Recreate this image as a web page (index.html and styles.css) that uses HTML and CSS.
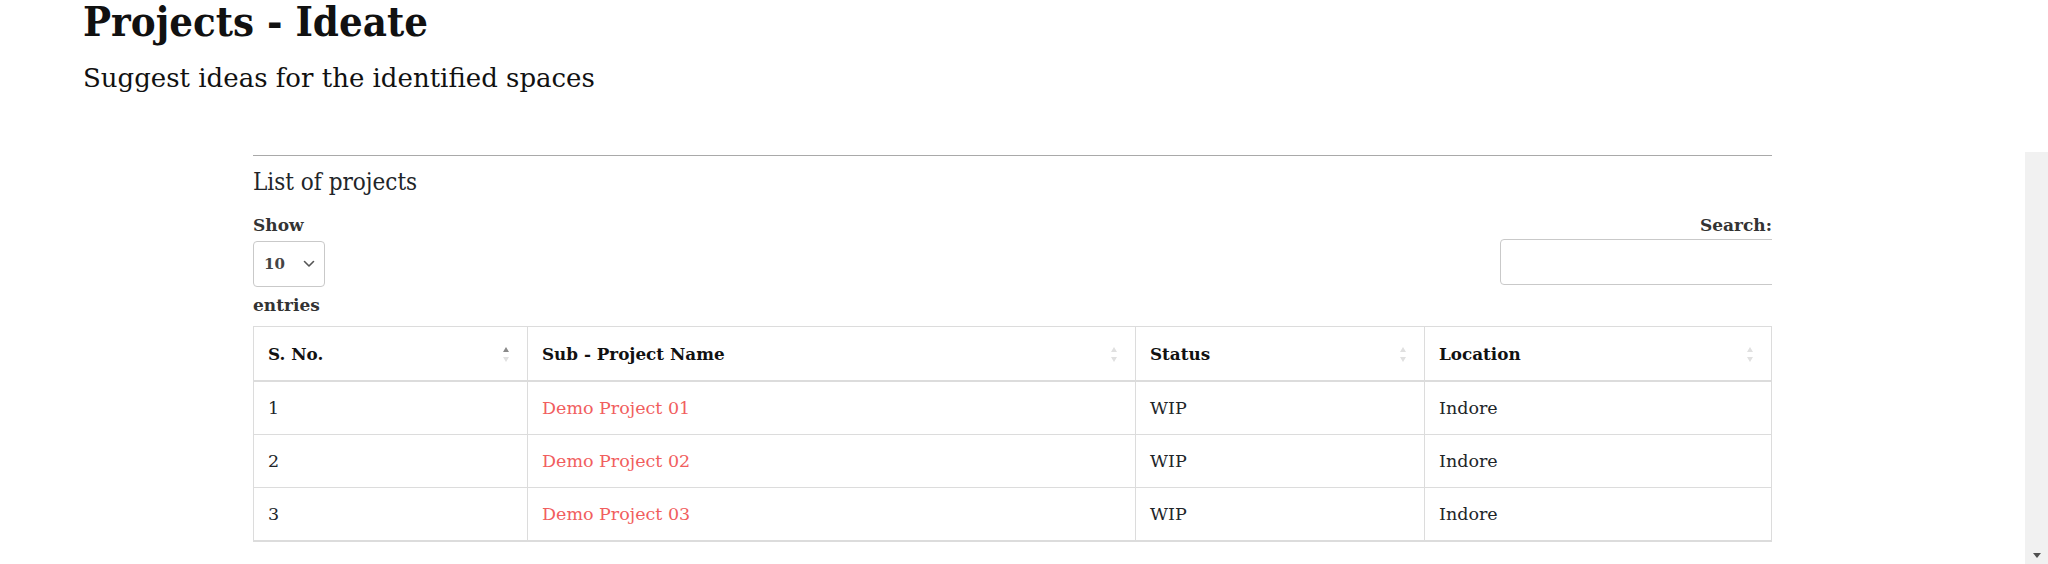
FILE: index.html
```html
<!DOCTYPE html>
<html lang="en">
<head>
<meta charset="utf-8">
<title>Projects - Ideate</title>
<link rel="stylesheet" href="styles.css">
</head>
<body>
  <header class="page-head">
    <h1 class="page-title">Projects - Ideate</h1>
    <p class="page-subtitle">Suggest ideas for the identified spaces</p>
  </header>
  <div class="workspace">
    <main class="content">
      <section class="panel">
        <hr class="panel-rule">
        <h2 class="panel-title">List of projects</h2>
        <div class="controls">
          <div class="length-control">
            <span class="control-label">Show</span>
            <div class="select-box">
              <span class="select-value">10</span>
              <svg class="chevron" width="12" height="8" viewBox="0 0 12 8"><path d="M1.5 1.5 L6 6 L10.5 1.5" fill="none" stroke="#555" stroke-width="1.6" stroke-linecap="round" stroke-linejoin="round"/></svg>
            </div>
            <span class="control-label">entries</span>
          </div>
          <div class="filter-control">
            <span class="control-label">Search:</span>
            <input class="search-input" type="text" aria-label="Search">
          </div>
        </div>
        <table class="projects">
          <colgroup>
            <col class="col-sno">
            <col class="col-name">
            <col class="col-status">
            <col class="col-loc">
          </colgroup>
          <thead>
            <tr>
              <th><div class="th-inner"><span>S. No.</span><span class="sort sort-asc"><i class="up"></i><i class="down"></i></span></div></th>
              <th><div class="th-inner"><span>Sub - Project Name</span><span class="sort"><i class="up"></i><i class="down"></i></span></div></th>
              <th><div class="th-inner"><span>Status</span><span class="sort"><i class="up"></i><i class="down"></i></span></div></th>
              <th><div class="th-inner"><span>Location</span><span class="sort"><i class="up"></i><i class="down"></i></span></div></th>
            </tr>
          </thead>
          <tbody>
            <tr><td>1</td><td><a class="project-link" href="#">Demo Project 01</a></td><td>WIP</td><td>Indore</td></tr>
            <tr><td>2</td><td><a class="project-link" href="#">Demo Project 02</a></td><td>WIP</td><td>Indore</td></tr>
            <tr><td>3</td><td><a class="project-link" href="#">Demo Project 03</a></td><td>WIP</td><td>Indore</td></tr>
          </tbody>
        </table>
      </section>
    </main>
    <div class="scrollbar"><span class="scroll-arrow"></span></div>
  </div>
</body>
</html>
```

FILE: styles.css
```css
html, body {
  margin: 0;
  padding: 0;
  background: #fff;
  overflow: hidden;
}
body {
  font-family: "DejaVu Serif", "Liberation Serif", serif;
  color: #212529;
  height: 564px;
  display: flex;
  flex-direction: column;
}
.page-head {
  height: 152px;
  box-sizing: border-box;
  padding: 0 0 0 83px;
  flex: none;
}
.page-title {
  margin: 0;
  font-size: 41.5px;
  line-height: 44px;
  font-weight: bold;
  font-stretch: semi-condensed;
  color: #111;
}
.page-subtitle {
  margin: 19px 0 0;
  font-size: 26px;
  line-height: 30px;
  color: #111;
}
.workspace {
  flex: 1;
  display: flex;
  min-height: 0;
}
.content {
  flex: 1;
  min-width: 0;
}
.panel {
  width: 1519px;
  margin: 0 auto;
  padding-top: 3px;
  overflow: hidden;
}
.panel-rule {
  margin: 0;
  border: 0;
  border-top: 1px solid #a9a9a9;
}
.panel-title {
  margin: 12px 0 0;
  font-size: 24px;
  line-height: 28px;
  font-weight: normal;
  font-stretch: semi-condensed;
  color: #212529;
}
.controls {
  display: flex;
  justify-content: space-between;
  align-items: flex-start;
  margin-top: 18px;
}
.length-control, .filter-control {
  display: flex;
  flex-direction: column;
}
.length-control { align-items: flex-start; }
.filter-control { align-items: flex-end; }
.control-label {
  font-size: 17px;
  line-height: 22px;
  font-weight: bold;
  color: #333;
}
.select-box {
  box-sizing: border-box;
  width: 72px;
  height: 46px;
  margin: 5px 0 7px;
  border: 1px solid #c9c9c9;
  border-radius: 4px;
  display: flex;
  align-items: center;
  justify-content: space-between;
  padding: 0 9px 0 10px;
}
.select-value {
  font-size: 15px;
  font-weight: bold;
  color: #444;
}
.search-input {
  box-sizing: border-box;
  width: 310px;
  height: 46px;
  margin: 3px -38px 0 0;
  border: 1px solid #c9c9c9;
  border-radius: 4px;
  background: #fff;
  font: inherit;
}
.projects {
  width: 100%;
  table-layout: fixed;
  margin-top: 10px;
  border-collapse: collapse;
  border-bottom: 2px solid #dcdcdc;
}
.col-sno { width: 274px; }
.col-name { width: 608px; }
.col-status { width: 289px; }
.projects th, .projects td {
  border: 1px solid #dcdcdc;
  padding: 14px 14px;
  line-height: 24px;
  font-size: 17.5px;
  text-align: left;
  vertical-align: middle;
}
.projects th {
  padding: 15px 18px 14px 14px;
  font-size: 16.8px;
  font-weight: bold;
  color: #111;
  border-bottom-width: 2px;
}
.th-inner {
  display: flex;
  justify-content: space-between;
  align-items: center;
}
.sort {
  display: flex;
  flex-direction: column;
  gap: 5px;
}
.sort i {
  display: block;
  width: 0;
  height: 0;
  border-left: 3.5px solid transparent;
  border-right: 3.5px solid transparent;
}
.sort .up { border-bottom: 5px solid #e0e0e0; }
.sort .down { border-top: 5px solid #e0e0e0; }
.sort-asc .up { border-bottom-color: #8a8a8a; }
.project-link {
  color: #f15e5e;
  text-decoration: none;
}
.scrollbar {
  flex: none;
  width: 23px;
  background: #f1f1f1;
  display: flex;
  flex-direction: column;
  justify-content: flex-end;
  align-items: center;
  padding-bottom: 6px;
  box-sizing: border-box;
}
.scroll-arrow {
  width: 0;
  height: 0;
  border-left: 4px solid transparent;
  border-right: 4px solid transparent;
  border-top: 5px solid #505050;
}
```
